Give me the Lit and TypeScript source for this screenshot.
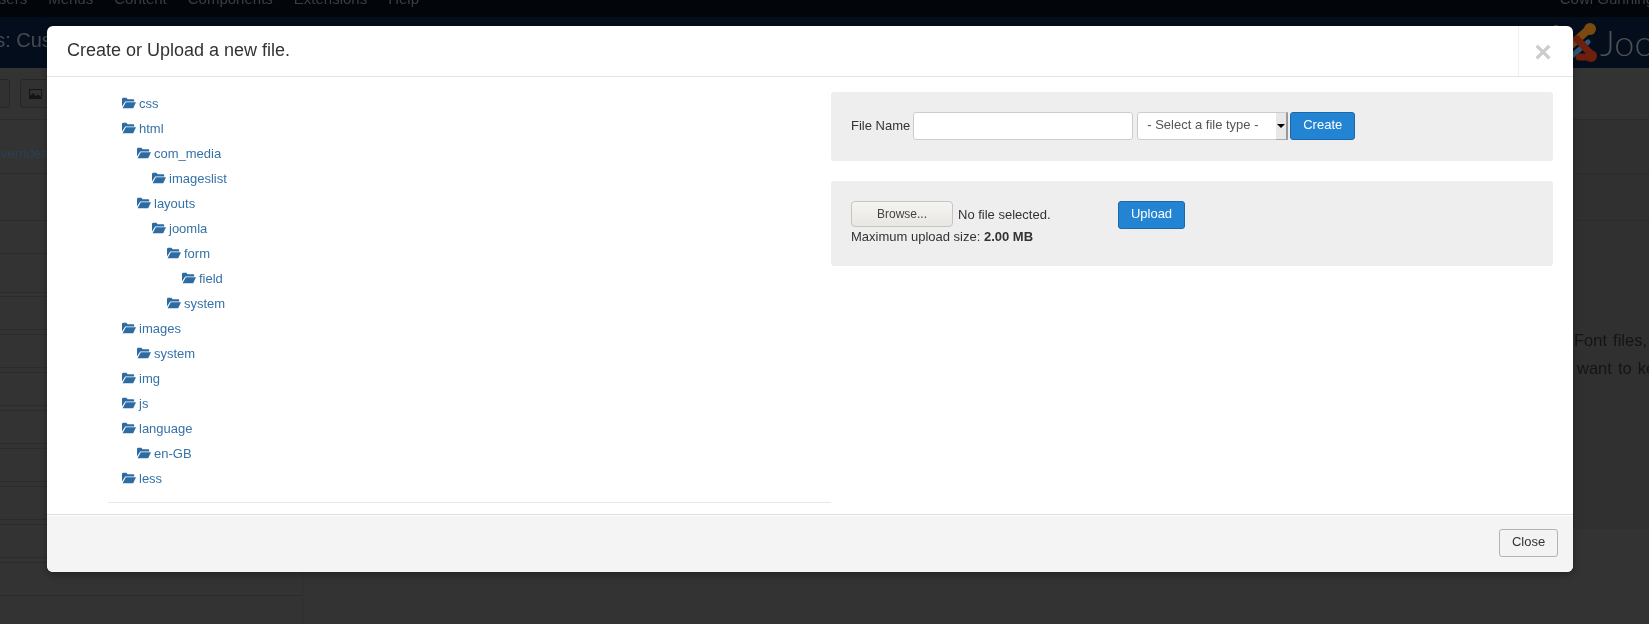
import { LitElement, html, css, svg } from "lit";
import { customElement } from "lit/decorators.js";

const tree: [string, number][] = [
  ["css", 0], ["html", 0], ["com_media", 1], ["imageslist", 2], ["layouts", 1], ["joomla", 2],
  ["form", 3], ["field", 4], ["system", 3], ["images", 0], ["system", 1], ["img", 0],
  ["js", 0], ["language", 0], ["en-GB", 1], ["less", 0],
];

const folder = svg`<path d="M0 2.2 Q0 .8 1.2 .8 H4.4 L5.6 2.2 H11.4 Q12.2 2.2 12.2 3.2 V4.4 H3.2 L0 9.4 Z"/><path d="M3.8 5.2 H14 L11.2 11.2 H.6 Z"/>`;

@customElement("app-root")
export class AppRoot extends LitElement {
  static styles = css`
    :host { display: block; font-family: "Liberation Sans", Arial, sans-serif; }
    * { box-sizing: border-box; }
    .page { position: relative; width: 1649px; height: 624px; overflow: hidden; background: #333; display: flex; flex-direction: column; filter: blur(.3px); }

    .topbar { flex: none; height: 17px; background: #020509; overflow: hidden; display: flex; justify-content: space-between; color: #3b3e42; font-size: 15px; line-height: 14px; }
    .nav { display: flex; gap: 21px; margin: -8px 0 0 -12px; }
    .user { margin: -8px -5px 0 0; }

    .brand { flex: none; height: 51px; background: #030d1c; display: flex; justify-content: space-between; align-items: center; overflow: hidden; }
    .brand h1 { margin: 0 0 5px -86px; font-size: 20px; font-weight: 400; color: #454a52; white-space: nowrap; }
    .logo { display: flex; align-items: center; flex: none; margin-right: -69px; }
    .logo svg { display: block; width: 45px; height: 50px; flex: none; }
    .logo span { font-family: Lato, sans-serif; font-weight: 300; font-size: 36px; color: #4d4f53; margin-left: 2px; line-height: 40px; margin-bottom: 2px; }

    .toolbar { flex: none; height: 52px; border-bottom: 1px solid #2c2c2c; display: flex; gap: 10px; padding: 11px 0 0; }
    .tb { height: 29px; border: 1px solid #272727; border-radius: 3px; background: #313131; display: flex; align-items: center; }
    .tb.a { width: 10px; border-left: 0; border-radius: 0 3px 3px 0; }
    .tb.b { width: 40px; padding-left: 8px; }
    .tb svg { width: 13px; height: 10px; fill: #151515; }

    .content { flex: 1; display: flex; min-height: 0; }
    .side { flex: none; width: 303px; border-right: 1px solid #2e2e2e; display: flex; flex-direction: column; }
    .r { flex: none; border-bottom: 1px solid #2c2c2c; }
    .r.over { height: 54px; display: flex; align-items: center; padding-top: 14px; color: #2a4055; font-size: 13px; margin-left: -9px; }
    .r.h47 { height: 47px; }
    .r.h33 { height: 33px; }
    .r.h39 { height: 39px; margin-bottom: 3px; }
    .r.item { height: 34px; margin-bottom: 4px; border-top: 1px solid #2c2c2c; }

    .main { flex: 1; display: flex; flex-direction: column; }
    .panel { flex: none; height: 409px; background: #303030; }
    .m1 { height: 54px; border-bottom: 1px solid #2c2c2c; }
    .m2 { height: 47px; border-bottom: 1px solid #2c2c2c; }
    .notes { margin: 105px 0 0 1271px; color: #141414; font-size: 16.5px; line-height: 28px; white-space: nowrap; word-spacing: 1.5px; }
    .notes div + div { padding-left: 3px; }

    .modal { position: absolute; left: 47px; top: 26px; width: 1526px; height: 546px; background: #fff; border-radius: 6px; box-shadow: 0 3px 7px rgba(0,0,0,.3); display: flex; flex-direction: column; overflow: hidden; color: #333; font-size: 13px; }
    .head { flex: none; height: 51px; border-bottom: 1px solid #e5e5e5; display: flex; align-items: stretch; }
    .head h3 { flex: 1; margin: 0; padding-left: 20px; font-size: 18px; font-weight: 400; line-height: 49px; color: #333; }
    .x { flex: none; width: 55px; border-left: 1px solid #f0f0f0; color: #ccc; font-size: 30px; font-weight: 700; display: flex; align-items: center; justify-content: center; padding: 2px 6px 0 0; line-height: 1; }

    .body { flex: 1; display: flex; min-height: 0; }
    .left { flex: none; width: 784px; padding: 14px 0 0 61px; display: flex; flex-direction: column; }
    .tree { margin: 0; padding: 0 0 0 14px; list-style: none; }
    .tree li { height: 25px; display: flex; align-items: center; color: #3572a8; line-height: 25px; }
    .tree svg { width: 14px; height: 12px; fill: #2d6ca2; margin-right: 3px; flex: none; margin-top: -2px; }
    .left hr { width: 100%; margin: 11px 0 0; border: 0; border-top: 1px solid #e8e8e8; }

    .right { flex: none; width: 722px; padding-top: 15px; display: flex; flex-direction: column; gap: 20px; }
    .well { background: #eee; border-radius: 3px; padding: 20px 20px 0; flex: none; }
    .w1 { height: 69px; display: flex; align-items: flex-start; }
    .w2 { height: 85px; }
    .w1 label { line-height: 28px; margin-right: 3px; }
    .w1 input { width: 220px; height: 28px; border: 1px solid #ccc; border-radius: 3px; background: #fff; margin: 0 4px 0 0; padding: 0 6px; }
    .select { width: 151px; height: 28px; border: 1px solid #ccc; border-radius: 3px; background: #fff; display: flex; justify-content: space-between; color: #555; margin-right: 2px; }
    .select span { padding-left: 9px; line-height: 24px; }
    .arrow { width: 12px; margin: -1px -1px -1px 0; background: #e8e8e8; border-right: 2px solid #999; border-bottom: 1px solid #aaa; border-top: 1px solid #ccc; display: flex; align-items: center; justify-content: center; }
    .arrow::after { content: ""; border: 4px solid transparent; border-top: 4px solid #000; border-bottom: 0; }
    .btn { height: 28px; width: 65px; padding: 0 0 3px; background: #2384d3; border: 1px solid #1b69a8; border-radius: 3px; color: #fff; font: 13px "Liberation Sans", Arial, sans-serif; }
    .up { display: flex; align-items: flex-start; }
    .up .browse { width: 102px; height: 26px; background: linear-gradient(#f4f4f2, #e9e7e3); border: 1px solid #c8c5bd; border-radius: 4px; font: 12px "Liberation Sans", Arial, sans-serif; color: #444; padding: 0; }
    .up .name { margin-left: 5px; line-height: 27px; width: 160px; }
    .up .btn { width: 67px; }
    .max { line-height: 19px; margin-top: -2px; }

    .foot { flex: none; height: 58px; background: #f4f4f4; border-top: 1px solid #ddd; box-shadow: inset 0 1px 0 #fff; display: flex; justify-content: flex-end; padding: 14px 15px 0 0; }
    .close { width: 59px; height: 28px; padding: 0 0 3px; background: #f3f3f3; border: 1px solid #b3b3b3; border-radius: 3px; color: #333; font: 13px "Liberation Sans", Arial, sans-serif; }
  `;

  render() {
    const items = Array.from({ length: 8 });
    return html`
      <div class="page">
        <div class="topbar">
          <div class="nav"><span>Users</span><span>Menus</span><span>Content</span><span>Components</span><span>Extensions</span><span>Help</span></div>
          <div class="user">Cowl Gunning</div>
        </div>
        <div class="brand">
          <h1>Templates: Customise</h1>
          <div class="logo">
            <svg viewBox="0 0 45 50" fill="none" stroke-linecap="round">
              <path d="M3 10 L14 15" stroke="#5b5a12" stroke-width="6"/>
              <path d="M18 27 L36 11" stroke="#7a4a10" stroke-width="8"/>
              <circle cx="37" cy="11" r="6" fill="#7a4a10"/>
              <path d="M20 37 L35 24" stroke="#2e5677" stroke-width="5"/>
              <path d="M24 21 L37 35" stroke="#6e1f0e" stroke-width="7"/>
              <path d="M26 39 L36 39" stroke="#6e1f0e" stroke-width="7"/>
              <circle cx="38" cy="38" r="6" fill="#6e1f0e"/>
            </svg>
            <span>Joomla!</span>
          </div>
        </div>
        <div class="toolbar">
          <div class="tb a"></div>
          <div class="tb b"><svg viewBox="0 0 13 10"><path d="M0 0H13V10H0Z M1 1V7L4 4L7 7L9 5.5L12 8V1Z" fill-rule="evenodd"/></svg></div>
        </div>
        <div class="content">
          <div class="side">
            <div class="r over">Overrides</div>
            <div class="r h47"></div>
            <div class="r h33"></div>
            <div class="r h39"></div>
            ${items.map(() => html`<div class="r item"></div>`)}
          </div>
          <div class="main">
            <div class="panel">
              <div class="m1"></div>
              <div class="m2"></div>
              <div class="notes"><div>Font files, images and stylesheets</div><div>want to keep them</div></div>
            </div>
          </div>
        </div>

        <div class="modal">
          <div class="head">
            <h3>Create or Upload a new file.</h3>
            <div class="x">×</div>
          </div>
          <div class="body">
            <div class="left">
              <ul class="tree">
                ${tree.map(([n, d]) => html`<li style="padding-left:${d * 15}px"><svg viewBox="0 0 14 12">${folder}</svg>${n}</li>`)}
              </ul>
              <hr />
            </div>
            <div class="right">
              <div class="well w1">
                <label>File Name</label>
                <input type="text" />
                <div class="select"><span>- Select a file type -</span><div class="arrow"></div></div>
                <button class="btn">Create</button>
              </div>
              <div class="well w2">
                <div class="up">
                  <button class="browse">Browse...</button>
                  <div class="name">No file selected.</div>
                  <button class="btn">Upload</button>
                </div>
                <div class="max">Maximum upload size: <b>2.00 MB</b></div>
              </div>
            </div>
          </div>
          <div class="foot"><button class="close">Close</button></div>
        </div>
      </div>
    `;
  }
}
